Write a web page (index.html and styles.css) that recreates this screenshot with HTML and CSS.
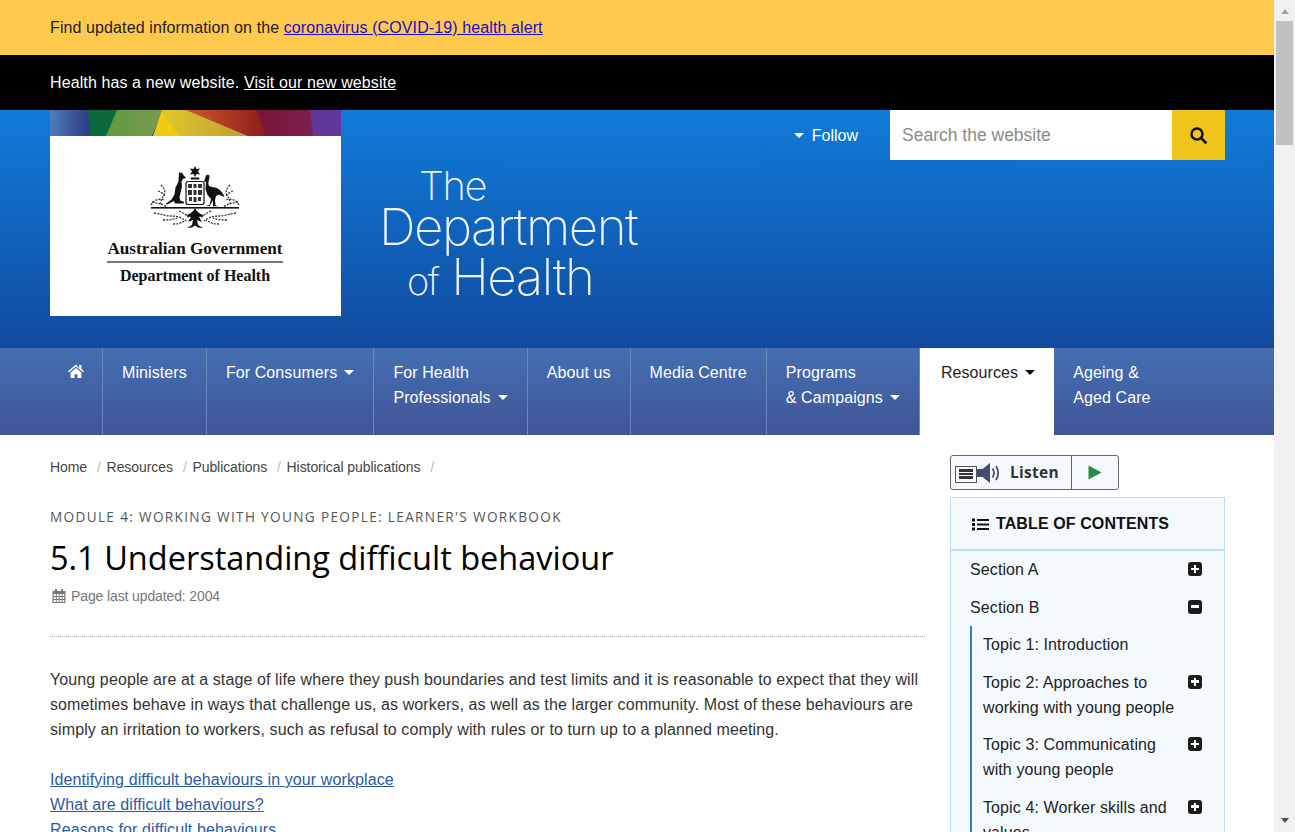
FILE: index.html
```html
<!DOCTYPE html>
<html lang="en">
<head>
  <meta charset="UTF-8" />
  <title>5.1 Understanding difficult behaviour</title>
  <link rel="stylesheet" href="styles.css">
</head>
<body>
<div class="shell">
  <div class="page">
    <div class="alert alert-yellow"><span>Find updated information on the <a href="#">coronavirus (COVID-19) health alert</a></span></div>
    <div class="alert alert-black"><span>Health has a new website. <a href="#">Visit our new website</a></span></div>

    <header class="site-header">
      <div class="logo">
        <svg class="rainbow" width="291" height="26" viewBox="0 0 291 26">
          <defs>
            <linearGradient id="g-blue"><stop offset="0" stop-color="#4f7cb8"/><stop offset="1" stop-color="#2a3a80"/></linearGradient>
            <linearGradient id="g-green"><stop offset="0" stop-color="#5c9a3f"/><stop offset="1" stop-color="#7c9a50"/></linearGradient>
            <linearGradient id="g-gold"><stop offset="0" stop-color="#e0c828"/><stop offset="1" stop-color="#c09a35"/></linearGradient>
            <linearGradient id="g-red"><stop offset="0" stop-color="#d2582a"/><stop offset="1" stop-color="#8c1c1c"/></linearGradient>
            <linearGradient id="g-maroon"><stop offset="0" stop-color="#7c1434"/><stop offset="1" stop-color="#7a2050"/></linearGradient>
          </defs>
          <rect width="291" height="26" fill="#2a3a80"/>
          <polygon points="0,0 39,0 41,26 0,26" fill="url(#g-blue)"/>
          <polygon points="38,0 68,0 57,26 40,26" fill="#0b6a3c"/>
          <polygon points="67,0 113,0 102,26 56,26" fill="url(#g-green)"/>
          <polygon points="112,0 137,0 199,26 128,26" fill="url(#g-gold)"/>
          <polygon points="112,0 103,26 129,26" fill="#f4c914"/>
          <polygon points="136,0 208,0 216,26 198,26" fill="url(#g-red)"/>
          <polygon points="207,0 261,0 264,26 215,26" fill="url(#g-maroon)"/>
          <polygon points="260,0 291,0 291,26 263,26" fill="#62379a"/>
        </svg>
        <div class="logo-body">
          <svg class="crest" width="92" height="66" viewBox="0 0 92 66">
            <!-- foliage -->
            <g fill="none" stroke="#333" stroke-width="1.3" stroke-dasharray="2 1.2">
              <path d="M12 19c3 3 5 6 3 10s-4 6-3 10"/>
              <path d="M9 25c3 1 6 3 7 6"/>
              <path d="M2 39c3-5 8-7 14-5"/>
              <path d="M3 36c6 1 10 2 15 5"/>
              <path d="M81 19c-3 3-5 6-3 10s4 6 3 10"/>
              <path d="M84 25c-3 1-6 3-7 6"/>
              <path d="M90 39c-3-5-8-7-14-5"/>
              <path d="M89 36c-6 1-10 2-15 5"/>
              <path d="M5 47c7 1 12 3 17 3s10 1 15 5"/>
              <path d="M87 47c-7 1-12 3-17 3s-10 1-15 5"/>
              <path d="M14 54c6 0 10 0 14-2"/>
              <path d="M78 54c-6 0-10 0-14-2"/>
              <path d="M24 58c5 0 9-1 13-4"/>
              <path d="M70 58c-5 0-9-1-13-4"/>
              <path d="M30 45c4 2 8 4 10 7"/>
              <path d="M62 45c-4 2-8 4-10 7"/>
            </g>
            <g fill="#111">
              <!-- star and crest -->
              <polygon points="46,0 47.500,3 51,2.500 49,5.500 51,8.500 47.500,8 46,11 44.500,8 41,8.500 43,5.500 41,2.500 44.500,3"/>
              <rect x="41.500" y="11.500" width="9" height="2" rx="1"/>
              <!-- kangaroo -->
              <path d="M30 6l2 1.500 1 -1.500 1 2.500 3 3.500-3 .8-1.500 3 .5 5-1.500 6-1 5 1 3 3 .8.5 2-9-.2-1-2.500-7 3.500-1.500-.5 6-4.500 3-5 1-7 3-6z"/>
              <!-- emu -->
              <path d="M57 9.500c1.500-1.500 3.500-1 3.500 1 0 3-1.500 5-1 8 .3 2 3 2.500 6 3 4 .6 8 4 10 9.500l-6-2.500-2.500 1.500-1 4 .5 5.500 3 .8-5.500 0 0-6-3.500 6-3.500-.5 3.500-.8 1.500-6-3.500-4-2-6 .5-7-2 -.5z"/>
              <!-- base bar -->
              <rect x="2" y="41" width="88" height="1.600"/>
              <!-- lower spray -->
              <path d="M46 42c-2 5-7 6-9 8l5 1-3 5 5-2-1 5-5 3 5-.5 3-2 3 2 5 .5-5-3-1-5 5 2-3-5 5-1c-2-2-7-3-9-8z"/>
            </g>
            <!-- shield -->
            <rect x="37" y="15.500" width="18" height="23" rx="2" fill="#fff" stroke="#111" stroke-width="1.200"/>
            <g fill="#333">
              <rect x="39" y="18" width="4" height="4"/><rect x="44.500" y="18" width="3" height="4"/><rect x="49" y="18" width="4" height="4"/>
              <rect x="39" y="24" width="4" height="5"/><rect x="44.500" y="24" width="3" height="5"/><rect x="49" y="24" width="4" height="5"/>
              <rect x="40" y="31" width="3" height="4"/><rect x="44.500" y="31" width="3" height="5"/><rect x="49" y="31" width="3" height="4"/>
            </g>
          </svg>
          <div class="gov">Australian Government</div>
          <div class="dept">Department of Health</div>
        </div>
      </div>

      <div class="logotype">
        <div class="lt-the">The</div>
        <div class="lt-dept">Department</div>
        <div class="lt-health"><span class="lt-of">of</span> Health</div>
      </div>

      <div class="tools">
        <a class="follow" href="#"><i class="caret"></i>Follow</a>
        <div class="search">
          <div class="search-input">Search the website</div>
          <div class="search-btn">
            <svg width="18" height="18" viewBox="0 0 18 18"><circle cx="8" cy="8" r="5.500" fill="none" stroke="#111" stroke-width="2.400"/><path d="M12 12l4.500 4.500" stroke="#111" stroke-width="2.600" stroke-linecap="round"/></svg>
          </div>
        </div>
      </div>
    </header>

    <nav class="main-nav">
      <a class="nav-item nav-home" href="#">
        <svg width="16" height="14" viewBox="0 0 16 14"><path fill="#fff" d="M8 0.500L0 7.300l.9 1L8 2.400l7.100 5.900.9-1-2.600-2.200V1h-2.200v3.200zM2.600 8.600V14h3.900v-3.800h3V14h3.900V8.600L8 4.100z"/></svg>
      </a>
      <a class="nav-item" href="#">Ministers</a>
      <a class="nav-item" href="#">For Consumers<i class="caret"></i></a>
      <a class="nav-item" href="#">For Health<br>Professionals<i class="caret"></i></a>
      <a class="nav-item" href="#">About us</a>
      <a class="nav-item" href="#">Media Centre</a>
      <a class="nav-item" href="#">Programs<br>&amp; Campaigns<i class="caret"></i></a>
      <a class="nav-item nav-active" href="#">Resources<i class="caret caret-dark"></i></a>
      <a class="nav-item nav-last" href="#">Ageing &amp;<br>Aged Care</a>
    </nav>

    <div class="content">
      <main class="main-col">
        <ol class="breadcrumb">
          <li>Home</li>
          <li>Resources</li>
          <li>Publications</li>
          <li>Historical publications</li>
        </ol>
        <div class="eyebrow">MODULE 4: WORKING WITH YOUNG PEOPLE: LEARNER'S WORKBOOK</div>
        <h1>5.1 Understanding difficult behaviour</h1>
        <div class="updated">
          <svg width="14" height="14" viewBox="0 0 14 14"><path fill="#777" d="M3 0h2v2h4V0h2v2h2.500v12H.5V2H3zM1.700 5v2h2.100V5zm3.100 0v2h1.900V5zm2.900 0v2h1.900V5zm2.900 0v2h1.700V5zM1.700 8v2h2.100V8zm3.100 0v2h1.900V8zm2.900 0v2h1.900V8zm2.900 0v2h1.700V8zM1.700 11v2h2.100v-2zm3.100 0v2h1.900v-2zm2.900 0v2h1.900v-2zm2.900 0v2h1.700v-2z"/></svg>
          Page last updated: 2004
        </div>
        <hr class="dotted">
        <p class="intro">Young people are at a stage of life where they push boundaries and test limits and it is reasonable to expect that they will sometimes behave in ways that challenge us, as workers, as well as the larger community. Most of these behaviours are simply an irritation to workers, such as refusal to comply with rules or to turn up to a planned meeting.</p>
        <ul class="page-links">
          <li><a href="#">Identifying difficult behaviours in your workplace</a></li>
          <li><a href="#">What are difficult behaviours?</a></li>
          <li><a href="#">Reasons for difficult behaviours</a></li>
        </ul>
      </main>

      <aside class="side-col">
        <div class="listen">
          <div class="listen-main">
            <span class="listen-menu"><i></i><i></i><i></i></span>
            <svg width="24" height="22" viewBox="0 0 24 22"><path fill="#444a72" d="M0 7h5.500L13 1v20l-7.500-6H0z"/><path fill="none" stroke="#444a72" stroke-width="1.700" d="M15.500 6.500c2 3 2 6 0 9M19 4c2.800 4.500 2.800 9.500 0 14"/></svg>
            <span class="listen-text">Listen</span>
          </div>
          <div class="listen-play">
            <svg width="14" height="15" viewBox="0 0 14 15"><polygon points="0.500,0.500 13.500,7.500 0.500,14.500" fill="#2d8a4b"/></svg>
          </div>
        </div>

        <div class="toc">
          <div class="toc-head">
            <svg width="17" height="13" viewBox="0 0 17 13"><g fill="#111"><rect y="0.500" width="3" height="3"/><rect y="5" width="3" height="3"/><rect y="9.500" width="3" height="3"/><rect x="5" y="1" width="12" height="2"/><rect x="5" y="5.500" width="12" height="2"/><rect x="5" y="10" width="12" height="2"/></g></svg>
            TABLE OF CONTENTS
          </div>
          <ul class="toc-list">
            <li class="toc-item"><span>Section A</span><i class="tog tog-plus"></i></li>
            <li class="toc-item"><span>Section B</span><i class="tog tog-minus"></i></li>
            <li>
              <ul class="toc-sub">
                <li class="toc-item"><span>Topic 1: Introduction</span></li>
                <li class="toc-item"><span>Topic 2: Approaches to working with young people</span><i class="tog tog-plus"></i></li>
                <li class="toc-item"><span>Topic 3: Communicating with young people</span><i class="tog tog-plus"></i></li>
                <li class="toc-item"><span>Topic 4: Worker skills and values</span><i class="tog tog-plus"></i></li>
              </ul>
            </li>
          </ul>
        </div>
      </aside>
    </div>
  </div>

  <div class="scrollbar">
    <i class="sb-up"></i>
    <div class="sb-thumb"></div>
    <i class="sb-down"></i>
  </div>
</div>
</body>
</html>
```

FILE: styles.css
```css
html, body {
  margin: 0;
  height: 832px;
  overflow: hidden;
}

body {
  background: #fff;
  color: #333;
  font-family: "Liberation Sans", Arial, sans-serif;
  font-size: 16px;
  letter-spacing: 0.105px;
}

ul, ol {
  list-style: none;
  margin: 0;
  padding: 0;
}

.shell {
  display: flex;
  height: 832px;
}

.page {
  width: 1274px;
  height: 832px;
  overflow: hidden;
  flex: none;
}

/* scrollbar */
.scrollbar {
  width: 21px;
  flex: none;
  background: #f1f1f1;
  display: flex;
  flex-direction: column;
  align-items: center;
  box-sizing: border-box;
  padding: 9px 0 9px 0;
}

.sb-up {
  width: 0;
  height: 0;
  border-left: 4.500px solid transparent;
  border-right: 4.500px solid transparent;
  border-bottom: 5px solid #a3a3a3;
}

.sb-thumb {
  width: 17px;
  height: 124px;
  margin-top: 7px;
  background: #c1c1c1;
}

.sb-down {
  width: 0;
  height: 0;
  margin-top: auto;
  border-left: 4.500px solid transparent;
  border-right: 4.500px solid transparent;
  border-top: 5px solid #505050;
}

/* alert bars */
.alert {
  height: 55px;
  padding: 0 50px;
  display: flex;
  align-items: center;
}

.alert-yellow {
  background: #ffc94d;
  color: #222;
}

.alert-yellow a {
  color: #1a0dcc;
}

.alert-black {
  background: #000;
  color: #fff;
}

.alert-black a {
  color: #fff;
}

/* header */
.site-header {
  height: 238px;
  padding: 0 49px 0 50px;
  display: flex;
  background: linear-gradient(#107bd9, #114a9f);
}

.logo {
  width: 291px;
  height: 206px;
  flex: none;
  background: #fff;
}

.rainbow {
  display: block;
}

.logo-body {
  display: flex;
  flex-direction: column;
  align-items: center;
  padding-top: 30px;
  padding-right: 1px;
  color: #111;
  font-family: "Liberation Serif", "Times New Roman", serif;
  font-weight: bold;
  letter-spacing: 0;
}

.crest {
  display: block;
  filter: blur(0.3px);
}

.gov {
  width: 176px;
  margin-top: 7px;
  padding-bottom: 2px;
  border-bottom: 2px solid #777;
  font-size: 17.200px;
  line-height: 20px;
  text-align: center;
  white-space: nowrap;
}

.dept {
  margin-top: 4px;
  font-size: 16px;
  line-height: 18px;
  white-space: nowrap;
}

.logotype {
  width: 270px;
  flex: none;
  margin-left: 38px;
  padding-top: 57px;
  color: #eef4fb;
  font-family: Inter, "Liberation Sans", sans-serif;
  font-weight: 200;
  white-space: nowrap;
}

.lt-the {
  margin: 0 0 1px 40px;
  font-size: 40px;
  line-height: 38px;
  letter-spacing: -1.500px;
}

.lt-dept {
  font-size: 51px;
  line-height: 42px;
  letter-spacing: -1.500px;
}

.lt-health {
  margin-left: 28px;
  font-size: 51px;
  line-height: 58px;
  letter-spacing: -1.500px;
}

.lt-of {
  font-size: 38px;
}

.tools {
  margin-left: auto;
  display: flex;
  align-items: flex-start;
}

.follow {
  height: 50px;
  display: flex;
  align-items: center;
  margin-right: 32px;
  padding-top: 1px;
  box-sizing: border-box;
  color: #fff;
  letter-spacing: 0;
  text-decoration: none;
}

.follow .caret {
  margin: 0 8px 0 0;
}

.caret {
  display: inline-block;
  width: 0;
  height: 0;
  margin-left: 7px;
  vertical-align: 3px;
  border-left: 5px solid transparent;
  border-right: 5px solid transparent;
  border-top: 5px solid #fff;
}

.caret-dark {
  border-top-color: #111;
}

.search {
  display: flex;
  height: 50px;
}

.search-input {
  width: 270px;
  padding-left: 12px;
  background: #fff;
  color: #8a8a8a;
  font-size: 17.500px;
  line-height: 50px;
  letter-spacing: 0;
}

.search-btn {
  width: 53px;
  box-sizing: border-box;
  padding-right: 2px;
  background: #f0c419;
  display: flex;
  align-items: center;
  justify-content: center;
}

/* main nav */
.main-nav {
  height: 87px;
  padding-left: 50px;
  display: flex;
  background: linear-gradient(#456fb2, #3f5596);
  letter-spacing: 0.095px;
}

.nav-item {
  padding: 12px 19px 0 19px;
  border-right: 1px solid #6a88bb;
  color: #fff;
  line-height: 25px;
  text-decoration: none;
  white-space: nowrap;
}

.nav-home {
  padding: 16px 18px 0 18px;
}

.nav-home svg {
  display: block;
}

.nav-active {
  padding-left: 21px;
  padding-right: 19px;
  background: #fff;
  border-right: 0;
  color: #222;
}

.nav-last {
  border-right: 0;
}

/* content */
.content {
  padding: 20px 49px 0 50px;
  display: flex;
  justify-content: space-between;
}

.main-col {
  width: 875px;
  flex: none;
}

.side-col {
  width: 275px;
  flex: none;
}

.breadcrumb {
  display: flex;
  height: 25px;
  font-size: 14px;
  line-height: 25px;
  letter-spacing: -0.070px;
  color: #444;
}

.breadcrumb li::after {
  content: "/";
  margin: 0 5.700px 0 10px;
  color: #bbb;
}

.eyebrow {
  margin-top: 27px;
  font-family: "Open Sans", sans-serif;
  font-size: 13.600px;
  line-height: 20px;
  letter-spacing: 1.340px;
  color: #555;
}

h1 {
  margin: 9px 0 0 0;
  font-family: "Open Sans", sans-serif;
  font-size: 32.500px;
  font-weight: 400;
  line-height: 44px;
  letter-spacing: 0;
  color: #000;
}

.updated {
  margin-top: 6px;
  display: flex;
  align-items: center;
  gap: 5px;
  padding-left: 2px;
  font-size: 14px;
  line-height: 20px;
  letter-spacing: -0.120px;
  color: #777;
}

.dotted {
  margin: 30px 0 0 0;
  border: 0;
  border-top: 1px dotted #aaa;
}

.intro {
  margin: 30px 0 0 0;
  line-height: 25px;
  color: #333;
}

.page-links {
  margin-top: 25px;
  line-height: 25px;
}

.page-links a {
  color: #2a5ba8;
}

/* listen button */
.listen {
  width: 169px;
  height: 35px;
  box-sizing: border-box;
  display: flex;
  background: #f5f9fd;
  border: 1px solid #666;
  border-radius: 3px;
}

.listen-main {
  width: 121px;
  flex: none;
  display: flex;
  align-items: center;
  padding-left: 4px;
  box-sizing: border-box;
  border-right: 1px solid #666;
}

.listen-menu {
  width: 22px;
  height: 17px;
  flex: none;
  box-sizing: border-box;
  border: 1px solid #555;
  display: flex;
  flex-direction: column;
  justify-content: center;
  gap: 1px;
  padding: 0 3px;
  margin-top: 3px;
}

.listen-menu i {
  display: block;
  height: 2.500px;
  background: #333;
}

.listen-main svg {
  flex: none;
}

.listen-text {
  margin: -2px 0 0 9px;
  font-family: "Open Sans", sans-serif;
  font-size: 15.500px;
  font-weight: 700;
  letter-spacing: 0.300px;
  color: #333;
}

.listen-play {
  flex: 1;
  display: flex;
  align-items: center;
  justify-content: center;
}

/* table of contents */
.toc {
  margin-top: 7px;
  height: 400px;
  box-sizing: border-box;
  background: #f3f9fc;
  border: 1px solid #bfdcee;
}

.toc-head {
  height: 53px;
  box-sizing: border-box;
  display: flex;
  align-items: center;
  gap: 7px;
  padding: 1px 0 0 21px;
  border-bottom: 2px solid #c5deef;
  font-weight: bold;
  color: #111;
}

.toc-list {
  padding: 6px 22px 0 19px;
  color: #222;
  line-height: 25px;
}

.toc-item {
  display: flex;
  justify-content: space-between;
  padding-bottom: 12.500px;
}

.toc-sub {
  margin-top: -6px;
  padding: 6px 0 0 11px;
  border-left: 2px solid #3a7db5;
}

.toc-sub .toc-item span {
  max-width: 196px;
}

.tog {
  position: relative;
  width: 14px;
  height: 14px;
  margin-top: 5px;
  flex: none;
  border-radius: 3px;
  background: #1c1c1c;
}

.tog::before {
  content: "";
  position: absolute;
  left: 3px;
  top: 5.700px;
  width: 8px;
  height: 2.600px;
  background: #fff;
}

.tog-plus::after {
  content: "";
  position: absolute;
  left: 5.700px;
  top: 3px;
  width: 2.600px;
  height: 8px;
  background: #fff;
}
```
